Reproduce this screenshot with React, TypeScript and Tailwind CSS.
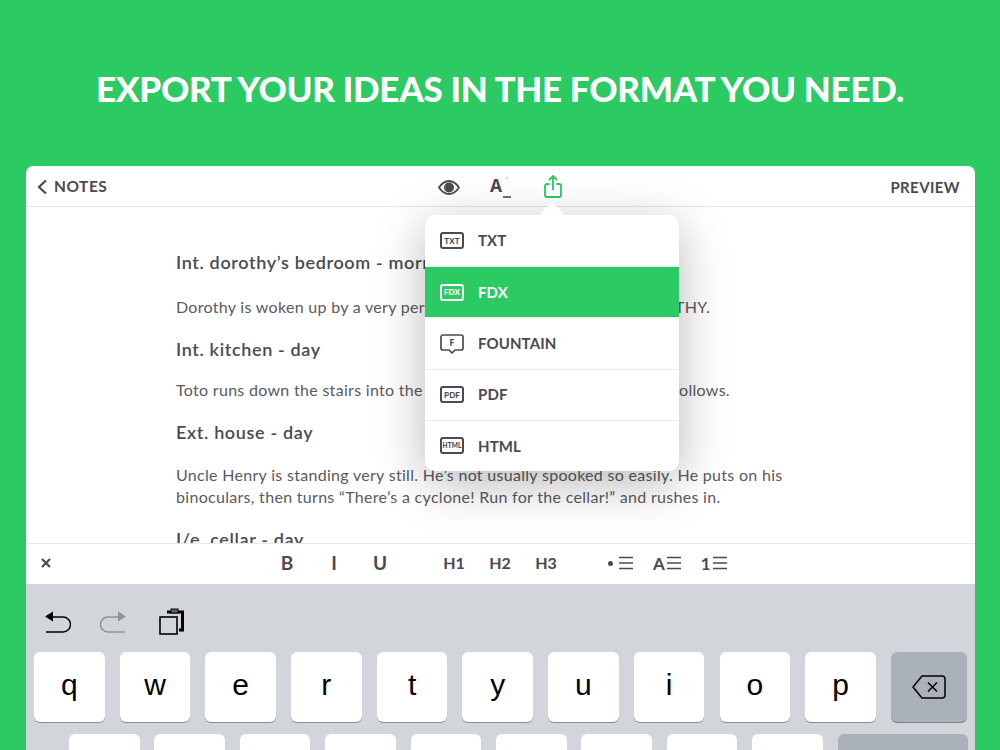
const sans = "font-['Lato','Noto_Sans',sans-serif]";

const rowOne = ["q", "w", "e", "r", "t", "y", "u", "i", "o", "p"];
const rowTwo = ["", "", "", "", "", "", "", "", ""];

const formats = [
  { label: "TXT", tag: "TXT" },
  { label: "FDX", tag: "FDX", active: true },
  { label: "FOUNTAIN", tag: "F", bubble: true },
  { label: "PDF", tag: "PDF" },
  { label: "HTML", tag: "HTML" },
];

function FormatBadge({ tag, active, bubble }: { tag: string; active?: boolean; bubble?: boolean }) {
  const colour = active ? "#ffffff" : "#4a4a50";
  if (bubble) {
    return (
      <svg width="24" height="22" viewBox="0 0 24 22" fill="none" className="mt-[4px]">
        <path
          d="M3 1h18a2 2 0 0 1 2 2v11a2 2 0 0 1-2 2h-6l-3 3-3-3H3a2 2 0 0 1-2-2V3a2 2 0 0 1 2-2z"
          stroke={colour}
          strokeWidth="1.7"
          strokeLinejoin="round"
        />
        <text x="12" y="12" fontSize="8.5" fontWeight="900" textAnchor="middle" fill={colour} fontFamily="Lato">
          {tag}
        </text>
      </svg>
    );
  }
  return (
    <div
      className={`flex h-[17px] w-[24px] items-center justify-center rounded-[3px] border-2 font-black leading-none ${
        tag === "HTML" ? "text-[6.5px]" : "text-[8px]"
      } ${active ? "border-white text-white" : "border-[#4a4a50] text-[#4a4a50]"}`}
    >
      {tag}
    </div>
  );
}

function ListIcon() {
  return (
    <svg width="14" height="14" viewBox="0 0 14 14" stroke="#4a4a50" strokeWidth="1.7">
      <path d="M0 1.500h14M0 7h14M0 12.500h14" />
    </svg>
  );
}

function Key({ label }: { label: string }) {
  return (
    <div className="flex h-[70px] w-[70.6px] shrink-0 items-center justify-center rounded-[6px] bg-white pb-[6px] font-['Liberation_Sans',sans-serif] text-[30px] text-black shadow-[0_1px_0_#8b8e93]">
      {label}
    </div>
  );
}

export default function App() {
  return (
    <div className={`flex h-[750px] w-[1000px] flex-col overflow-hidden bg-[#2bca63] ${sans}`}>
      <h1 className="mt-[65px] h-[47px] text-center text-[35px] leading-[46px] font-black tracking-[-0.3px] text-white">
        EXPORT YOUR IDEAS IN THE FORMAT YOU NEED.
      </h1>

      <div className="relative mt-[54px] ml-[26px] flex h-[584px] w-[949px] shrink-0 flex-col rounded-t-[7px] bg-white text-[#4a4a50]">
        {/* top bar */}
        <div className="grid h-[41px] shrink-0 grid-cols-[1fr_auto_1fr] items-center border-b border-[#e3e3e6] px-[11px] pt-[2px]">
          <div className="flex items-center gap-[6px]">
            <svg width="11" height="16" viewBox="0 0 11 16" fill="none" stroke="#4a4a50" strokeWidth="2.2">
              <path d="M9 1.500 2 8l7 6.500" />
            </svg>
            <span className="text-[15.5px] font-bold tracking-[0.5px]">NOTES</span>
          </div>
          <div className="mr-[2px] flex items-center">
            <svg width="22" height="15" viewBox="0 0 22 15" fill="none">
              <path
                d="M1 7.500C4 3 7.200 1 11 1s7 2 10 6.500C18 12 14.800 14 11 14S4 12 1 7.500z"
                stroke="#4a4a50"
                strokeWidth="1.800"
              />
              <circle cx="11" cy="7.500" r="5" fill="#4a4a50" />
              <path d="M9 4a4.500 4.500 0 0 0 0 7 5 5 0 0 1 0-7z" fill="#c9c9cc" />
            </svg>
            <svg width="22" height="24" viewBox="0 0 22 24" className="ml-[30px]">
              <text x="0" y="17" fontSize="20" fontWeight="700" fill="#4a4a50" fontFamily="Liberation Mono">
                A
              </text>
              <path d="M13 22h8" stroke="#4a4a50" strokeWidth="1.600" />
              <circle cx="17" cy="3" r="0.700" fill="#8b8b90" />
            </svg>
            <svg width="18" height="23" viewBox="0 0 18 23" fill="none" stroke="#2bca63" strokeWidth="1.800" className="mb-[2px] ml-[32px]">
              <path d="M5.500 9H3a2 2 0 0 0-2 2v9a2 2 0 0 0 2 2h12a2 2 0 0 0 2-2v-9a2 2 0 0 0-2-2h-2.500" />
              <path d="M9 15V1.500M5 5l4-4 4 4" />
            </svg>
          </div>
          <div className="pr-[4px] text-right text-[15px] font-bold tracking-[0.4px]">PREVIEW</div>
        </div>

        {/* editor */}
        <div className="flex h-[336px] shrink-0 flex-col overflow-hidden pl-[150px] text-[16px] leading-[22px] tracking-[0.3px] text-[#5a5a60]">
          <h2 className="mt-[44px] text-[18px] leading-[22px] font-semibold tracking-[0.65px] text-[#4a4a50]">Int. dorothy’s bedroom - morning</h2>
          <p className="mt-[23px]">Dorothy is woken up by a very persistent bark. It’s TOTO, and DOROTHY.</p>
          <h2 className="mt-[20px] text-[18px] leading-[22px] font-semibold tracking-[0.65px] text-[#4a4a50]">Int. kitchen - day</h2>
          <p className="mt-[19px]">Toto runs down the stairs into the kitchen, barking so loud. Dorothy follows.</p>
          <h2 className="mt-[20px] text-[18px] leading-[22px] font-semibold tracking-[0.65px] text-[#4a4a50]">Ext. house - day</h2>
          <p className="mt-[21px] w-[625px]">
            Uncle Henry is standing very still. He’s not usually spooked so easily. He puts on his binoculars, then
            turns “There’s a cyclone! Run for the cellar!” and rushes in.
          </p>
          <h2 className="mt-[20px] text-[18px] leading-[22px] font-semibold tracking-[0.65px] text-[#4a4a50]">I/e. cellar - day</h2>
        </div>

        {/* formatting bar */}
        <div className="flex h-[41px] shrink-0 items-center border-t border-[#e8e8ea] pb-[2px] font-bold">
          <svg width="12" height="12" viewBox="0 0 12 12" stroke="#4a4a50" strokeWidth="2.200" className="ml-[14px]">
            <path d="M2 2l8 8M10 2l-8 8" />
          </svg>
          <span className="ml-[228px] w-[14px] text-center text-[19px]">B</span>
          <span className="ml-[33px] w-[14px] text-center text-[19px]">I</span>
          <span className="ml-[32px] w-[14px] text-center text-[19px]">U</span>
          <span className="ml-[56px] w-[22px] text-center text-[16px]">H1</span>
          <span className="ml-[24px] w-[22px] text-center text-[16px]">H2</span>
          <span className="ml-[24px] w-[22px] text-center text-[16px]">H3</span>
          <span className="ml-[51px] flex items-center gap-[6px]">
            <span className="size-[5px] rounded-full bg-[#4a4a50]" />
            <ListIcon />
          </span>
          <span className="ml-[20px] flex items-center gap-[2px] text-[17px] leading-none">
            A
            <ListIcon />
          </span>
          <span className="ml-[20px] flex items-center gap-[2px] text-[17px] leading-none">
            1
            <ListIcon />
          </span>
        </div>

        {/* keyboard */}
        <div className="flex flex-1 flex-col bg-[#d2d5da] pl-[8px]">
          <div className="flex h-[68px] shrink-0 items-center pt-[6px] pl-[10px]">
            <svg width="27" height="26" viewBox="0 0 27 26" fill="none" stroke="#000" strokeWidth="1.500">
              <path d="M8 9h11a6.500 6.500 0 0 1 0 15H2" />
              <path d="M9 3.500v10L1 8.500z" fill="#000" stroke="none" />
            </svg>
            <svg width="27" height="26" viewBox="0 0 27 26" fill="none" stroke="#8e9196" strokeWidth="1.500" className="ml-[29px]">
              <path d="M19 9H8a6.500 6.500 0 0 0 0 15h17" />
              <path d="M18 3.500v10l8-5z" fill="#8e9196" stroke="none" />
            </svg>
            <svg width="25" height="27" viewBox="0 0 25 27" fill="none" className="ml-[32px]">
              <path d="M8 4h15.500v18H20" stroke="#000" strokeWidth="3" />
              <rect x="12" y="1" width="7" height="4" fill="#666" stroke="#000" />
              <rect x="1" y="9" width="17" height="17" fill="#d2d5da" stroke="#000" strokeWidth="1.600" />
            </svg>
          </div>
          <div className="flex gap-[15.1px]">
            {rowOne.map((k) => (
              <Key key={k} label={k} />
            ))}
            <div className="flex h-[70px] w-[76px] shrink-0 items-center justify-center rounded-[6px] bg-[#abb1ba] shadow-[0_1px_0_#7d8085]">
              <svg width="36" height="26" viewBox="0 0 36 26" fill="none" stroke="#000" strokeWidth="1.500">
                <path d="M11 2h20a3 3 0 0 1 3 3v16a3 3 0 0 1-3 3H11L2 13z" strokeLinejoin="round" />
                <path d="M17 8.500l9 9M26 8.500l-9 9" />
              </svg>
            </div>
          </div>
          <div className="mt-[12px] flex gap-[14.8px] pl-[35px]">
            {rowTwo.map((k, i) => (
              <Key key={i} label={k} />
            ))}
            <div className="h-[70px] w-[130px] shrink-0 rounded-[6px] bg-[#abb1ba]" />
          </div>
        </div>

        {/* export menu */}
        <div className="absolute top-[49px] left-[399px] w-[254px] rounded-[10px] bg-white shadow-[0_12px_50px_rgba(0,0,0,0.28)]">
          <div className="absolute -top-[9px] left-[117px] size-[20px] rotate-45 rounded-[2px] bg-white" />
          <div className="relative flex flex-col overflow-hidden rounded-[10px]">
            {formats.map((f, i) => (
              <div
                key={f.label}
                className={`flex h-[51.200px] items-center gap-[14px] px-[15px] text-[15px] font-bold tracking-[0.1px] ${
                  i > 0 ? "border-t border-[#ececf0]" : ""
                } ${f.active ? "bg-[#2bca63] text-white" : "text-[#4a4a50]"}`}
              >
                <FormatBadge tag={f.tag} active={f.active} bubble={f.bubble} />
                {f.label}
              </div>
            ))}
          </div>
        </div>
      </div>
    </div>
  );
}
